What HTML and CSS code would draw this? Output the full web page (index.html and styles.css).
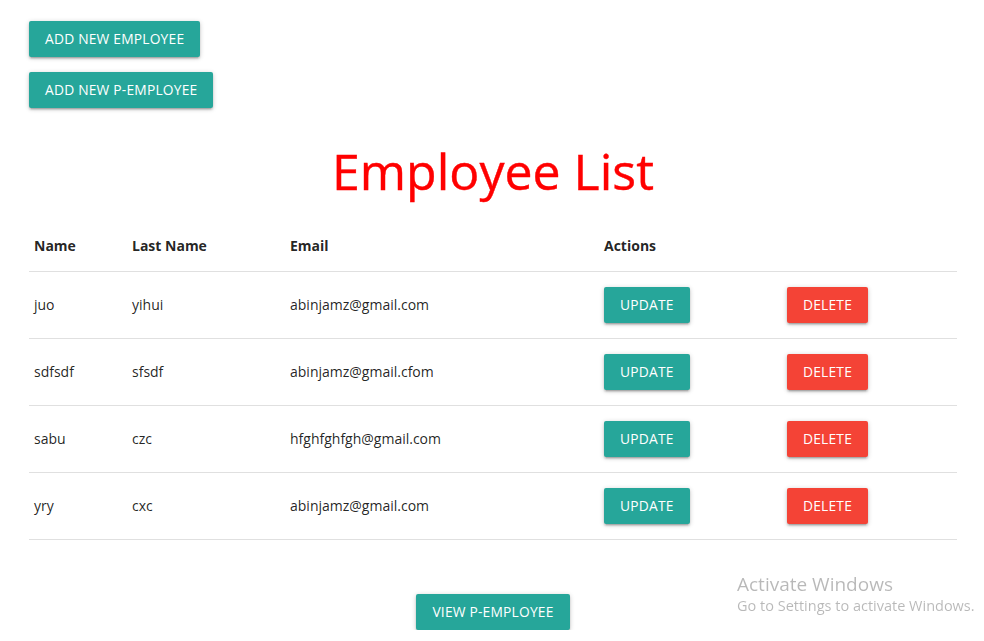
FILE: index.html
```html
<!DOCTYPE html>
<html>
<head>
<meta charset="utf-8">
<link rel="stylesheet" href="styles.css">
</head>
<body>
<div class="container">
  <div class="top-actions">
    <a class="btn btn-teal">Add New Employee</a>
    <a class="btn btn-teal">Add New P-Employee</a>
  </div>
  <h1 class="title">Employee List</h1>
  <table class="emp-table">
    <thead>
      <tr>
        <th class="c1">Name</th>
        <th class="c2">Last Name</th>
        <th class="c3">Email</th>
        <th class="c4">Actions</th>
        <th class="c5"></th>
      </tr>
    </thead>
    <tbody>
      <tr><td>juo</td><td>yihui</td><td>abinjamz@gmail.com</td><td><a class="btn btn-teal">Update</a></td><td><a class="btn btn-red">Delete</a></td></tr>
      <tr><td>sdfsdf</td><td>sfsdf</td><td>abinjamz@gmail.cfom</td><td><a class="btn btn-teal">Update</a></td><td><a class="btn btn-red">Delete</a></td></tr>
      <tr><td>sabu</td><td>czc</td><td>hfghfghfgh@gmail.com</td><td><a class="btn btn-teal">Update</a></td><td><a class="btn btn-red">Delete</a></td></tr>
      <tr><td>yry</td><td>cxc</td><td>abinjamz@gmail.com</td><td><a class="btn btn-teal">Update</a></td><td><a class="btn btn-red">Delete</a></td></tr>
    </tbody>
  </table>
  <div class="bottom-actions">
    <a class="btn btn-teal">View P-Employee</a>
  </div>
</div>
<div class="watermark">
  <div class="wm-title">Activate Windows</div>
  <div class="wm-sub">Go to Settings to activate Windows.</div>
</div>
</body>
</html>
```
FILE: styles.css
```css
html, body {
  margin: 0;
  padding: 0;
  background: #fff;
  font-family: "Open Sans", "Noto Sans", sans-serif;
  color: rgba(0,0,0,0.87);
  font-size: 14px;
}
.container {
  padding: 21px 27px 0 29px;
}
.top-actions {
  display: flex;
  flex-direction: column;
  align-items: flex-start;
  gap: 15px;
}
.btn {
  display: inline-block;
  height: 36px;
  line-height: 36px;
  padding: 0 16px;
  border-radius: 2px;
  color: #fff;
  text-transform: uppercase;
  font-size: 13.8px;
  letter-spacing: 0.2px;
  box-shadow: 0 2px 2px 0 rgba(0,0,0,0.14), 0 3px 1px -2px rgba(0,0,0,0.12), 0 1px 5px 0 rgba(0,0,0,0.2);
  white-space: nowrap;
  cursor: pointer;
}
.btn-teal { background: #26a69a; }
.btn-red { background: #f44336; }
.title {
  margin: 30px 0 16px;
  text-align: center;
  color: #ff0000;
  font-size: 50px;
  font-weight: 400;
  -webkit-text-stroke: 0.4px #ff0000;
  line-height: 66px;
}
.emp-table {
  width: 100%;
  border-collapse: collapse;
}
.emp-table th, .emp-table td {
  text-align: left;
  padding: 15px 5px;
  vertical-align: middle;
}
.emp-table th {
  font-weight: 700;
  line-height: 21px;
  font-size: 14px;
}
.emp-table tr {
  border-bottom: 1px solid rgba(0,0,0,0.12);
}
.emp-table td {
  line-height: 36px;
}
.c1 { width: 88px; }
.c2 { width: 148px; }
.c3 { width: 304px; }
.c4 { width: 173px; }
.bottom-actions {
  display: flex;
  justify-content: center;
  margin-top: 54px;
}
.watermark {
  position: fixed;
  left: 737px;
  top: 572px;
  color: rgba(0,0,0,0.28);
}
.wm-title { font-size: 19px; line-height: 24px; }
.wm-sub { font-size: 14.5px; line-height: 20px; }
```
